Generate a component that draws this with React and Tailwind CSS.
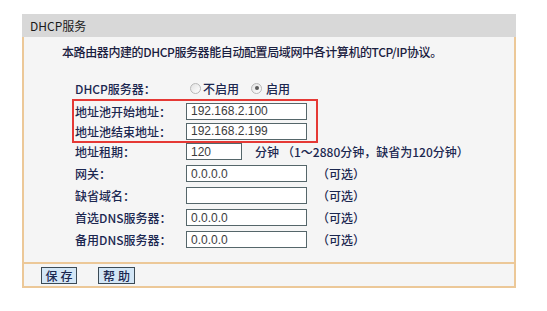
import React from "react";

const CJK = { fontFamily: '"Noto Sans CJK SC", "Noto Sans", sans-serif' };

function Field({ value, width = "w-[121px]" }) {
  return (
    <input
      readOnly
      value={value}
      className={`${width} h-[17px] border border-[#55666a] bg-white pl-[4px] text-[12px] leading-[15px] text-[#3c3c3c] outline-none`}
      style={{ fontFamily: '"Liberation Sans", Arial, sans-serif' }}
    />
  );
}

function Radio({ checked }) {
  return (
    <span className="relative inline-flex h-[11px] w-[11px] items-center justify-center rounded-full border border-[#b8b8b8] bg-gradient-to-br from-[#e2e2e2] to-white">
      {checked && <span className="h-[4px] w-[4px] rounded-full bg-[#5a5a5a]" />}
    </span>
  );
}

function Row({ label, children, red }) {
  return (
    <div className={`flex ${red ? "h-[20px] items-center pl-[1px]" : "h-[22px] items-start pl-[3px]"}`}>
      <div className="w-[111px] shrink-0 text-[12px] font-medium leading-[17px] text-[#1b2750]">{label}</div>
      <div className="flex items-center text-[12px] font-medium leading-[17px] text-[#1b2750]">{children}</div>
    </div>
  );
}

function Optional() {
  return <span className="ml-[10px] text-[12px] font-medium leading-[17px] text-[#1b2750]">（可选）</span>;
}

export default function App() {
  return (
    <div className="h-[311px] w-[547px] bg-white pl-[22px] pt-[14px]" style={CJK}>
      <div className="w-[494px]">
        <div className="flex h-[23px] items-center bg-[#d8d8d8] pl-[8px] text-[12px] text-[#1a1a1a]">
          DHCP服务
        </div>
        <div className="border-x-2 border-[#ecc898] bg-[#f5f5f5] pb-[9px] pl-[48px] pt-[7px]">
          <div className="-ml-[10px] text-[12px] font-medium leading-[16px] tracking-[-0.4px] text-[#1a2040]">
            本路由器内建的DHCP服务器能自动配置局域网中各计算机的TCP/IP协议。
          </div>
          <div className="mt-[18px] flex h-[20px] items-center pl-[3px]">
            <div className="w-[111px] shrink-0 text-[12px] font-medium leading-[17px] text-[#1b2750]">DHCP服务器：</div>
            <div className="flex items-center text-[12px] font-medium leading-[17px] text-[#1b2750]">
              <span className="ml-[4px] flex"><Radio /></span>
              <span className="ml-[2px]">不启用</span>
              <span className="ml-[12px] flex"><Radio checked /></span>
              <span className="ml-[4px]">启用</span>
            </div>
          </div>
          <div className="mt-[1px] w-[246px] border-2 border-[#e53935]">
            <Row label="地址池开始地址：" red>
              <Field value="192.168.2.100" />
            </Row>
            <Row label="地址池结束地址：" red>
              <Field value="192.168.2.199" />
            </Row>
          </div>
          <Row label="地址租期：">
            <Field value="120" width="w-[56px]" />
            <span className="ml-[13px]">分钟</span>
            <span className="ml-[3px]">（1～2880分钟，缺省为120分钟）</span>
          </Row>
          <Row label="网关：">
            <Field value="0.0.0.0" />
            <Optional />
          </Row>
          <Row label="缺省域名：">
            <Field value="" />
            <Optional />
          </Row>
          <Row label="首选DNS服务器：">
            <Field value="0.0.0.0" />
            <Optional />
          </Row>
          <Row label="备用DNS服务器：">
            <Field value="0.0.0.0" />
            <Optional />
          </Row>
        </div>
        <div className="flex h-[26px] items-center gap-[21px] border-x-2 border-y-2 border-[#ecc898] bg-[#f5f5f5] pl-[17px]">
          <button className="h-[17px] w-[36px] border border-[#3b4a55] bg-[#d3e6f6] pl-[3px] text-[12px] font-medium leading-[15px] tracking-[3px] text-[#1b2750]">
            保存
          </button>
          <button className="h-[17px] w-[37px] border border-[#3b4a55] bg-[#d3e6f6] pl-[3px] text-[12px] font-medium leading-[15px] tracking-[3px] text-[#1b2750]">
            帮助
          </button>
        </div>
      </div>
    </div>
  );
}
